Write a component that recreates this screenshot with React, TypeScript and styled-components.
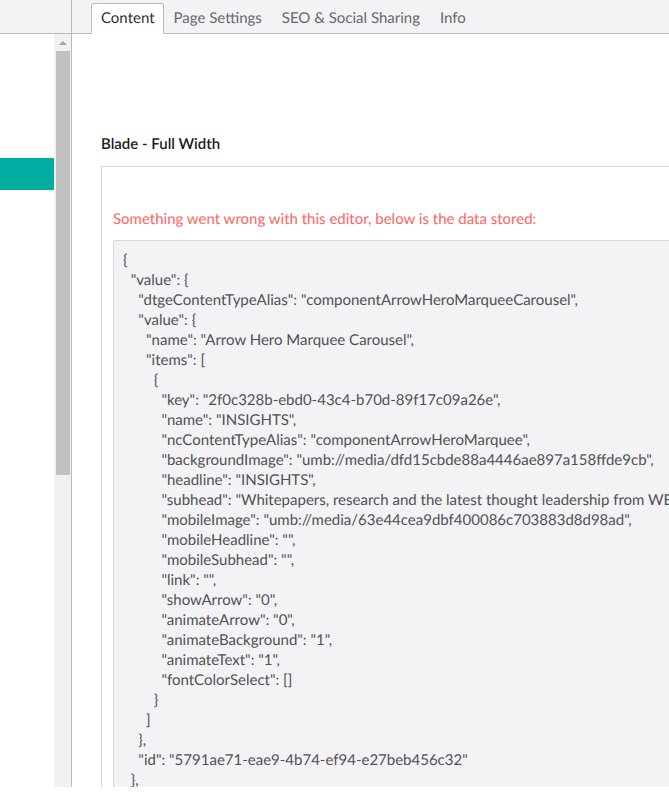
import { createGlobalStyle } from "styled-components";
import styled from "styled-components";

const GlobalStyle = createGlobalStyle`
  html, body {
    margin: 0;
    padding: 0;
    background: #fff;
  }
  body {
    font-family: Lato, "Open Sans", sans-serif;
    font-size: 15px;
    color: #303033;
    overflow: hidden;
    text-rendering: geometricPrecision;
  }
`;

const Page = styled.div`
  display: flex;
  width: 669px;
  height: 787px;
  overflow: hidden;
`;

const Sidebar = styled.aside`
  flex: 0 0 71px;
  display: flex;
  flex-direction: column;
  border-right: 1px solid #bbbabf;
`;

const SidebarTop = styled.div`
  flex: 0 0 33px;
  background: #f3f3f5;
  border-bottom: 1px solid #bbbabf;
`;

const SidebarBody = styled.div`
  flex: 1;
  display: flex;
  min-height: 0;
`;

const Tree = styled.div`
  flex: 1;
  padding-top: 124px;
`;

const ActiveNode = styled.div`
  height: 32px;
  background: #00aea2;
`;

const Scrollbar = styled.div`
  flex: 0 0 17px;
  display: flex;
  flex-direction: column;
  background: #f1f1f1;
`;

const ScrollArrow = styled.div`
  flex: 0 0 17px;
  display: flex;
  align-items: center;
  justify-content: center;
  &::before {
    content: "";
    border-left: 4px solid transparent;
    border-right: 4px solid transparent;
    border-bottom: 4px solid #a3a3a3;
  }
`;

const ScrollThumb = styled.div`
  height: 424px;
  margin: 0 1px 0 2px;
  background: #c1c1c1;
`;

const Main = styled.main`
  flex: 1;
  min-width: 0;
  display: flex;
  flex-direction: column;
`;

const TabBar = styled.nav`
  flex: 0 0 33px;
  display: flex;
  align-items: flex-end;
  padding-left: 19px;
  background: #f3f3f5;
  border-bottom: 1px solid #bbbabf;
`;

const Tab = styled.a<{ $active?: boolean }>`
  box-sizing: border-box;
  height: 31px;
  margin-bottom: -1px;
  padding: 0 ${(p) => (p.$active ? "8px" : "9px")} 2px 9px;
  display: flex;
  align-items: center;
  font-size: 15px;
  color: ${(p) => (p.$active ? "#303033" : "#68676b")};
  background: ${(p) => (p.$active ? "#fff" : "transparent")};
  border: 1px solid ${(p) => (p.$active ? "#bbbabf" : "transparent")};
  border-bottom-color: ${(p) => (p.$active ? "#fff" : "transparent")};
  border-radius: 3px 3px 0 0;
`;

const Content = styled.div`
  flex: 1;
  min-height: 0;
  overflow: hidden;
  padding: 100px 0 0 29px;
`;

const BladeLabel = styled.h3`
  margin: 0;
  font-size: 15px;
  font-weight: 600;
  line-height: 20px;
  color: #1b1b1d;
`;

const EditorBox = styled.div`
  margin-top: 12px;
  padding: 42px 0 0 11px;
  border: 1px solid #d8d7d9;
  border-right: 0;
  background: #fff;
`;

const ErrorText = styled.p`
  margin: 0 0 11px;
  font-size: 15px;
  line-height: 20px;
  white-space: nowrap;
  color: #fe6561;
`;

const DataDump = styled.pre`
  margin: 0;
  padding: 9px;
  font-family: Lato, "Open Sans", sans-serif;
  font-size: 15px;
  line-height: 20px;
  color: #515054;
  background: #f3f3f5;
  border: 1px solid #d8d7d9;
  border-right: 0;
  border-radius: 3px 0 0 3px;
  white-space: pre;
  overflow: hidden;
`;

const stored = `{
  "value": {
    "dtgeContentTypeAlias": "componentArrowHeroMarqueeCarousel",
    "value": {
      "name": "Arrow Hero Marquee Carousel",
      "items": [
        {
          "key": "2f0c328b-ebd0-43c4-b70d-89f17c09a26e",
          "name": "INSIGHTS",
          "ncContentTypeAlias": "componentArrowHeroMarquee",
          "backgroundImage": "umb://media/dfd15cbde88a4446ae897a158ffde9cb",
          "headline": "INSIGHTS",
          "subhead": "Whitepapers, research and the latest thought leadership from WE",
          "mobileImage": "umb://media/63e44cea9dbf400086c703883d8d98ad",
          "mobileHeadline": "",
          "mobileSubhead": "",
          "link": "",
          "showArrow": "0",
          "animateArrow": "0",
          "animateBackground": "1",
          "animateText": "1",
          "fontColorSelect": []
        }
      ]
    },
    "id": "5791ae71-eae9-4b74-ef94-e27beb456c32"
  },`;

export default function App() {
  return (
    <>
      <GlobalStyle />
      <Page>
        <Sidebar>
          <SidebarTop />
          <SidebarBody>
            <Tree>
              <ActiveNode />
            </Tree>
            <Scrollbar>
              <ScrollArrow />
              <ScrollThumb />
            </Scrollbar>
          </SidebarBody>
        </Sidebar>
        <Main>
          <TabBar>
            <Tab $active>Content</Tab>
            <Tab>Page Settings</Tab>
            <Tab>SEO &amp; Social Sharing</Tab>
            <Tab>Info</Tab>
          </TabBar>
          <Content>
            <BladeLabel>Blade - Full Width</BladeLabel>
            <EditorBox>
              <ErrorText>Something went wrong with this editor, below is the data stored:</ErrorText>
              <DataDump>{stored}</DataDump>
            </EditorBox>
          </Content>
        </Main>
      </Page>
    </>
  );
}
